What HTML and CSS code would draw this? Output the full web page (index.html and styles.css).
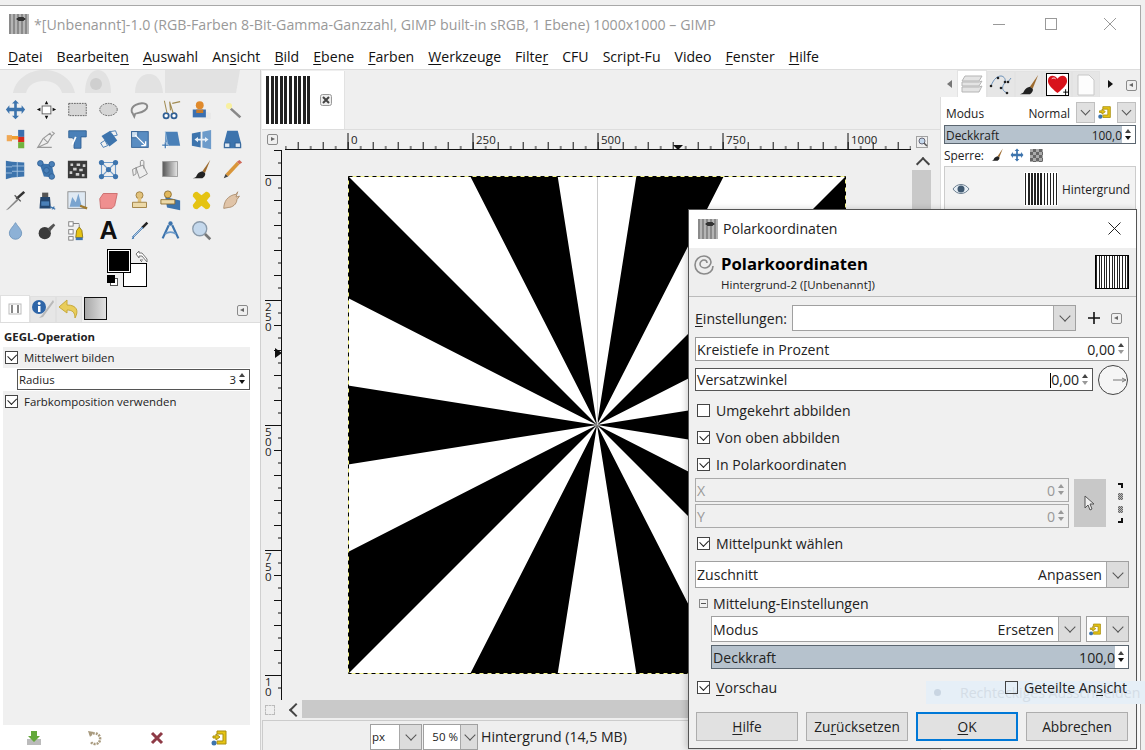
FILE: index.html
```html
<!DOCTYPE html>
<html lang="de">
<head>
    <meta charset="UTF-8">
    <title>GIMP</title>
    <link rel="stylesheet" href="styles.css">
</head>
<body>
<div class="window">
    <div class="titlebar">
        <span class="app-icon"></span>
        <span class="title-text">*[Unbenannt]-1.0 (RGB-Farben 8-Bit-Gamma-Ganzzahl, GIMP built-in sRGB, 1 Ebene) 1000x1000 – GIMP</span>
        <span class="win-btn win-min"></span>
        <span class="win-btn win-max"></span>
        <svg class="win-close" width="14" height="14" viewBox="0 0 14 14"><path d="M1 1l12 12M13 1L1 13" stroke="#999" fill="none"/></svg>
    </div>
    <div class="menubar">
        <span><u>D</u>atei</span><span>Bearbeite<u>n</u></span><span><u>A</u>uswahl</span><span>An<u>s</u>icht</span><span><u>B</u>ild</span><span><u>E</u>bene</span><span><u>F</u>arben</span><span><u>W</u>erkzeuge</span><span>Filte<u>r</u></span><span>CFU</span><span>Script-Fu</span><span>Video</span><span><u>F</u>enster</span><span><u>H</u>ilfe</span>
    </div>
    <div class="workspace">
        <!-- Toolbox -->
        <div class="toolbox">
            <svg class="wilber" width="260" height="23" viewBox="0 0 260 23"><path d="M13 23C16 8 30 0 44 0s28 8 31 23H62C60 15 53 11 44 11s-16 4-18 12z" fill="#e2e2e2"/><path d="M85 23c0-13 5-23 13-23s13 10 13 23z" fill="#e2e2e2"/><circle cx="96" cy="14" r="6" fill="#cfcfcf"/><path d="M135 23c0-12 6-19 14-19s13 7 14 19z" fill="#e2e2e2"/><path d="M165 0h75l-4 23h-71z" fill="#e2e2e2"/></svg>
            <div class="tool-grid">
                <svg viewBox="0 0 24 24"><path d="M12 1l4 4h-2.500v5H19V7l4 5-4 5v-3h-5.500v5H16l-4 4-4-4h2.500v-5H5v3l-4-5 4-5v3h5.500V5H8z" fill="#3d74ad"/></svg>
                <svg viewBox="0 0 24 24"><rect x="7" y="8" width="10" height="9" fill="#fff" stroke="#555"/><path d="M12 2l2 4h-4zM12 23l-2-4h4zM1 12l4-2v4zM23 12l-4 2v-4z" fill="#111"/></svg>
                <svg viewBox="0 0 24 24"><rect x="2" y="5" width="20" height="14" fill="#d6d6d6" stroke="#555" stroke-dasharray="2 1"/></svg>
                <svg viewBox="0 0 24 24"><ellipse cx="12" cy="12" rx="10" ry="7" fill="#d6d6d6" stroke="#555" stroke-dasharray="2 1"/></svg>
                <svg viewBox="0 0 24 24"><path d="M3 13c0-5 8-9 14-8 5 1 5 5 1 8-4 3-9 3-11 4l-1 3-2-4c-1-1-1-2-1-3z" fill="none" stroke="#8a8a8a" stroke-width="2.200"/></svg>
                <svg viewBox="0 0 24 24"><circle cx="7" cy="19" r="3" fill="#fff" stroke="#2f5f94" stroke-width="2"/><circle cx="16" cy="19" r="3" fill="#fff" stroke="#2f5f94" stroke-width="2"/><path d="M8 16L5 2M15 16L11 3l1 10M14 5l9-2" stroke="#a08a50" stroke-width="1.200" fill="none"/></svg>
                <svg viewBox="0 0 24 24"><path d="M12 13l11 3v7H12z" fill="#e9e9e9"/><rect x="2" y="12" width="15" height="9" fill="#3a6fb0"/><circle cx="10" cy="7" r="4.500" fill="#e08a2c"/><path d="M6 12h8v4H6z" fill="#c87a28"/></svg>
                <svg viewBox="0 0 24 24"><path d="M10 11l11 10" stroke="#888" stroke-width="3"/><circle cx="8" cy="8" r="3.500" fill="#f8f0a0"/></svg>

                <svg viewBox="0 0 24 24"><rect x="15" y="1" width="7" height="8" fill="#3a6fb0"/><rect x="15" y="9" width="7" height="6" fill="#d92a1c"/><rect x="15" y="15" width="7" height="7" fill="#72b33e"/><rect x="2" y="7" width="6" height="7" fill="#f0a855"/><path d="M8 8h7v4H8z" fill="#f0a030"/></svg>
                <svg viewBox="0 0 24 24"><path d="M2 21L8 11l8-6 2 3-5 8zM2 21h16M9 11l5 5M18 3l3 2-4 4" fill="none" stroke="#9a9a9a" stroke-width="1.200"/></svg>
                <svg viewBox="0 0 24 24"><path d="M2 2h20v7h-6v13h-8V12l-2-2H2z" fill="#4a80b8" stroke="#2f5f94"/><path d="M10 9l-4 9" stroke="#fff" stroke-width="2"/></svg>
                <svg viewBox="0 0 24 24"><path d="M4 8l10-6 8 11-9 7z" fill="#3d74ad"/><path d="M14 3l6-1 2 5-4 1zM3 16l5-3 3 6-5 2z" fill="#f2f2f2" stroke="#3d74ad"/></svg>

                <svg viewBox="0 0 24 24"><rect x="3" y="3" width="19" height="18" fill="#5a8dc2" stroke="#2f5f94"/><rect x="3" y="3" width="7" height="7" fill="#cfe0f0" stroke="#2f5f94"/><path d="M7 7l12 12M19 19v-5M19 19h-5" stroke="#fff" stroke-width="1.500" fill="none"/></svg>
                <svg viewBox="0 0 24 24"><path d="M6 3h14l3 16H6z" fill="#4a80b8"/><path d="M6 3l3 16" stroke="#9fc0de"/><path d="M6 15v7M2.500 18.500h7" stroke="#fff" stroke-width="3"/><path d="M6 15v7M2.500 18.500h7" stroke="#3d74ad" stroke-width="1.400"/></svg>
                <svg viewBox="0 0 24 24"><path d="M1 5l10-2v18L1 19z" fill="#3d74ad"/><path d="M13 3l10-2v22l-10-2z" fill="#6d9bca"/><path d="M4 12l4-3v2h8V9l4 3-4 3v-2H8v2z" fill="#e8f0f8"/></svg>
                <svg viewBox="0 0 24 24"><path d="M6 2h12l4 15v5H2v-5z" fill="#3d74ad"/><rect x="3" y="16" width="6" height="5" fill="#dfe9f3" stroke="#2f5f94"/><rect x="15" y="16" width="6" height="5" fill="#dfe9f3" stroke="#2f5f94"/></svg>

                <svg viewBox="0 0 24 24"><path d="M1 2l7 1v18l-7 2z" fill="#3d74ad"/><path d="M8 3l14 1v16l-14 1z" fill="#3d74ad"/><path d="M8 8h14M8 14h14M14 3v18M1 9h7M1 16h7" stroke="#a9c6e2"/></svg>
                <svg viewBox="0 0 24 24"><path d="M4 5l14 1 3 15-12-1z" fill="#3d74ad"/><circle cx="5" cy="5" r="3.200" fill="#4a80b8" stroke="#2f5f94"/><circle cx="18" cy="6" r="3.200" fill="#4a80b8" stroke="#2f5f94"/><circle cx="12" cy="13" r="3.200" fill="#4a80b8" stroke="#2f5f94"/><circle cx="18" cy="20" r="3.200" fill="#4a80b8" stroke="#2f5f94"/></svg>
                <svg viewBox="0 0 24 24"><rect x="1" y="2" width="22" height="20" fill="#3a3a3a"/><path d="M4 5h3v3H4zM11 5h4v3h-4zM18 6h3v3h-3zM7 10h4v3H7zM14 11h4v3h-4zM3 14h3v3H3zM10 16h4v3h-4zM17 17h3v3h-3z" fill="#cfcfcf"/></svg>
                <svg viewBox="0 0 24 24"><path d="M4 4h16v16H4zM4 4l8 8 8-8M4 20l8-8 8 8" fill="none" stroke="#6d9bca" stroke-width="1.300"/><g fill="#3d74ad"><circle cx="4" cy="4" r="3"/><circle cx="20" cy="4" r="3"/><circle cx="4" cy="20" r="3"/><circle cx="20" cy="20" r="3"/><circle cx="12" cy="12" r="3"/></g></svg>

                <svg viewBox="0 0 24 24"><path d="M8 10l8-3 5 10-9 5zM4 12l4-2v7l-3 2z" fill="#eee" stroke="#888"/><path d="M13 8V3c0-2 4-2 4 0v8" fill="none" stroke="#888"/></svg>
                <svg viewBox="0 0 24 24"><defs><linearGradient id="grad"><stop offset="0" stop-color="#555"/><stop offset="1" stop-color="#e8e8e8"/></linearGradient></defs><rect x="3" y="3" width="17" height="17" fill="url(#grad)" stroke="#999"/></svg>
                <svg viewBox="0 0 24 24"><path d="M22 1L13 14l3 2z" fill="#9c6a2e"/><path d="M13 14c-5 1-6 4-7 6-1 1-3 2-4 2h11c2-1 4-4 3-6z" fill="#222"/></svg>
                <svg viewBox="0 0 24 24"><path d="M17 3L4 17l3 3L20 6z" fill="#d9963a"/><path d="M17 3l3-2 3 3-3 2z" fill="#d06a5a"/><path d="M4 17l-2 5 5-2z" fill="#444"/></svg>

                <svg viewBox="0 0 24 24"><path d="M21 1l2 2-9 8-2-2z" fill="#333"/><path d="M14 10L3 21l-2 2 3-1 11-10z" fill="#888"/><path d="M11 6l7 7" stroke="#555" stroke-width="1.500"/></svg>
                <svg viewBox="0 0 24 24"><path d="M5 8h11l1 13H4z" fill="#24466e"/><rect x="7" y="3" width="7" height="5" fill="#555"/><rect x="6" y="13" width="9" height="5" fill="#4a80b8"/><path d="M16 19l6 3M18 22l3-3" stroke="#3d74ad" stroke-width="1.500"/></svg>
                <svg viewBox="0 0 24 24"><rect x="1" y="2" width="20" height="19" fill="#dfe9f3" stroke="#888"/><path d="M3 19l3-11 4 6 3-10 4 15z" fill="#7aa4cf"/><path d="M15 18l8 3" stroke="#a07a2e" stroke-width="2.500"/></svg>
                <svg viewBox="0 0 24 24"><path d="M6 4h16l-3 14-3 3H3L2 10z" fill="#ef8f8f" stroke="#c96868"/></svg>

                <svg viewBox="0 0 24 24"><circle cx="12" cy="6" r="4" fill="#e2c27c" stroke="#9a7a3a"/><path d="M10 9h4v5h-4z" fill="#e2c27c"/><path d="M4 14h16v6H4z" fill="#ecd9a8" stroke="#9a7a3a"/></svg>
                <svg viewBox="0 0 24 24"><path d="M6 8l17 4v11L8 20z" fill="#3d74ad"/><circle cx="9" cy="5" r="4" fill="#e2b85c" stroke="#8a6a2a"/><path d="M1 11h16v5H1z" fill="#ecd9a8" stroke="#8a6a2a"/></svg>
                <svg viewBox="0 0 24 24"><path d="M7 2l5 4 5-4c4 0 5 3 5 5l-4 5 4 5c0 3-2 5-5 5l-5-4-5 4c-3 0-5-2-5-5l4-5-4-5c0-3 2-5 5-5z" fill="#e5c313"/></svg>
                <svg viewBox="0 0 24 24"><path d="M5 11c3-4 8-6 11-6l2-3-2 6 4-1-3 4c0 5-5 9-10 9l-5 1c0-3 1-7 3-10z" fill="#e0c4a8" stroke="#a98a6a"/></svg>

                <svg viewBox="0 0 24 24"><path d="M12 3c3 5 7 8 7 12a7 7 0 0 1-14 0c0-4 4-7 7-12z" fill="#8db1d6" stroke="#6d93ba"/></svg>
                <svg viewBox="0 0 24 24"><circle cx="10" cy="15" r="7" fill="#3a3a3a"/><path d="M13 10l7-6 2 2-6 7z" fill="#555"/></svg>
                <svg viewBox="0 0 24 24"><rect x="2" y="2" width="5" height="5" fill="#fff" stroke="#777"/><rect x="2" y="11" width="5" height="5" fill="#fff" stroke="#777"/><rect x="2" y="19" width="5" height="4" fill="#fff" stroke="#777"/><path d="M7 4h7M14 5v3" stroke="#777"/><path d="M10 20l1-8 3-4 3 4 1 8z" fill="#e5c313" stroke="#8a7410"/><rect x="10" y="20" width="8" height="3" fill="#3d74ad"/></svg>
                <span class="tool-a">A</span>
                <svg viewBox="0 0 24 24"><path d="M20 2l2 2-6 6-2-2z" fill="#222"/><path d="M15 8L4 19l1 1L16 9z" fill="#cfe0f0" stroke="#3d74ad"/><path d="M5 18l-2 4 3-1z" fill="#3d74ad"/></svg>
                <svg viewBox="0 0 24 24"><circle cx="12" cy="4" r="2.500" fill="#3d74ad"/><path d="M10 6L3 21M14 6l7 15" stroke="#3d74ad" stroke-width="2.500"/><path d="M6 16c3-3 9-3 12 0" fill="none" stroke="#6d9bca" stroke-width="2"/></svg>
                <svg viewBox="0 0 24 24"><circle cx="10" cy="10" r="8" fill="#c4d8ec" stroke="#8a9aaa" stroke-width="1.500"/><path d="M16 16l6 6" stroke="#777" stroke-width="3"/></svg>
            </div>
            <div class="swatches">
                <span class="swatch swatch-bg"></span>
                <span class="swatch swatch-fg"></span>
                <span class="swatch-reset"></span>
                <svg class="swatch-swap" width="13" height="13" viewBox="0 0 13 13"><path d="M1 4l3-3v2h3l5 6v3L7 6H4v2zM7 12l-2-2h3" fill="#fff" stroke="#777"/></svg>
            </div>
            <div class="tabs tool-tabs">
                <span class="tab tab-active"><svg width="14" height="14" viewBox="0 0 14 14"><rect x="1" y="2" width="12" height="10" fill="none" stroke="#bbb"/><path d="M4 3v8M10 3v8" stroke="#888" stroke-width="2"/></svg></span>
                <span class="tab"><svg width="24" height="22" viewBox="0 0 24 22"><circle cx="8" cy="9" r="7" fill="#2f66a8"/><rect x="7" y="8" width="2.500" height="6" fill="#fff"/><circle cx="8.200" cy="5.500" r="1.400" fill="#fff"/><path d="M22 2L11 17l-3 3 4-1L23 4z" fill="#b9b9b9"/></svg></span>
                <span class="tab"><svg width="22" height="20" viewBox="0 0 22 20"><path d="M9 1L1 8l8 6v-3c5 0 8 2 8 8 4-7 2-13-8-13z" fill="#e9cd5a" stroke="#c7a93a"/></svg></span>
                <span class="tab tab-grad"></span>
                <span class="panel-menu tab-menu"></span>
            </div>
            <div class="tool-options">
                <div class="opt-title">GEGL-Operation</div>
                <label class="check-row opt-row"><span class="check on"></span>Mittelwert bilden</label>
                <div class="field radius"><span>Radius</span><span class="value">3</span><span class="spin"></span></div>
                <div class="opt-rest">
                    <label class="check-row"><span class="check on"></span>Farbkomposition verwenden</label>
                </div>
                <div class="opt-icons">
                    <svg width="16" height="16" viewBox="0 0 16 16"><rect x="1" y="9" width="14" height="6" fill="#bbb"/><path d="M5 1h6v5h3l-6 6-6-6h3z" fill="#63a83a"/></svg>
                    <svg width="16" height="16" viewBox="0 0 16 16"><path d="M3 5c6-4 11 0 10 5s-7 5-9 2" fill="none" stroke="#a89a7e" stroke-width="2.500" stroke-dasharray="2 1"/><path d="M1 1l6 1-4 5z" fill="#a89a7e"/></svg>
                    <svg width="16" height="16" viewBox="0 0 16 16"><path d="M3 3l10 10M13 3L3 13" stroke="#8e3a46" stroke-width="3"/></svg>
                    <svg width="18" height="18" viewBox="0 0 18 18"><path d="M7 2h9v13H7v-3h6V5H7z" fill="#e5c313" stroke="#a98f10"/><path d="M10 8L6 5v2H3v2h3v2z" fill="#e5c313" stroke="#a98f10"/><circle cx="4" cy="14" r="2.500" fill="#3d74ad"/></svg>
                </div>
            </div>
        </div>

        <!-- Image window -->
        <div class="center">
            <div class="image-tabs">
                <div class="image-tab">
                    <span class="stripes tab-thumb"></span>
                    <svg width="12" height="12" viewBox="0 0 12 12"><rect x=".5" y=".5" width="11" height="11" rx="2" fill="#eee" stroke="#999"/><path d="M3 3l6 6M9 3L3 9" stroke="#444" stroke-width="2"/></svg>
                </div>
            </div>
            <div class="canvas-grid">
                <div class="ruler-corner"><span class="panel-menu play"></span></div>
                <svg class="ruler-h" width="626" height="20">
                    <defs><pattern id="ticksH" x="62.700" y="0" width="25" height="20" patternUnits="userSpaceOnUse"><path d="M.5 12v8M13 16v4" stroke="#111"/></pattern></defs>
                    <rect width="626" height="20" fill="url(#ticksH)"/>
                    <path d="M0 19.500h626M63 3v17M188 3v17M313 3v17M438 3v17M563 3v17" stroke="#111"/>
                    <g class="ruler-num"><text x="66" y="14">0</text><text x="191" y="14">250</text><text x="316" y="14">500</text><text x="441" y="14">750</text><text x="566" y="14">1000</text></g>
                    <path d="M388 15h10l-5 5z" fill="#111"/>
                </svg>
                <div class="zoom-btn">
                    <svg width="12" height="12" viewBox="0 0 12 12"><rect x=".5" y=".5" width="11" height="11" fill="none" stroke="#555" stroke-dasharray="1 1"/><circle cx="6" cy="5" r="3" fill="#c4d8ec" stroke="#667"/><path d="M8 7l3 3" stroke="#555" stroke-width="1.500"/></svg>
                </div>
                <svg class="ruler-v" width="23" height="550">
                    <defs><pattern id="ticksV" x="0" y="25" width="23" height="25" patternUnits="userSpaceOnUse"><path d="M12 .5h8M16 13h4" stroke="#111"/></pattern></defs>
                    <rect width="23" height="550" fill="url(#ticksV)"/>
                    <path d="M19.500 0v550M3 25.500h17M3 150.500h17M3 275.500h17M3 400.500h17M3 525.500h17" stroke="#111"/>
                    <g class="ruler-num">
                        <text x="3" y="36">0</text>
                        <text x="3" y="161">2</text><text x="3" y="171">5</text><text x="3" y="181">0</text>
                        <text x="3" y="286">5</text><text x="3" y="296">0</text><text x="3" y="306">0</text>
                        <text x="3" y="411">7</text><text x="3" y="421">5</text><text x="3" y="431">0</text>
                        <text x="3" y="536">1</text><text x="3" y="546">0</text>
                    </g>
                    <path d="M13 198l7 5-7 5z" fill="#111"/>
                </svg>
                <div class="canvas">
                    <svg class="image" width="500" height="500" viewBox="-1 -1 500 500">
                        <rect width="498" height="498" fill="#fff"/>
                        <path d="M122.100 0h87.500L249 249zM288.400 0h87.500L249 249zM498 0v122.100L249 249zM498 209.600v78.800L249 249zM498 375.900V498L249 249zM375.900 498h-87.500L249 249zM209.600 498h-87.500L249 249zM0 498V375.900L249 249zM0 288.400v-78.800L249 249zM0 122.100V0l249 249z" fill="#000"/>
                        <path d="M249.500 0v249" stroke="#ccc"/>
                        <rect x=".5" y=".5" width="497" height="497" fill="none" stroke="#f4f48a"/>
                        <rect x=".5" y=".5" width="497" height="497" fill="none" stroke="#000" stroke-dasharray="4 4"/>
                    </svg>
                </div>
                <div class="vscroll"><span class="scroll-up"></span><span class="trough"></span></div>
                <div class="nav-corner"><span class="dotted-box"></span></div>
                <div class="hscroll"><span class="scroll-left"></span><span class="trough"></span></div>
            </div>
            <div class="statusbar">
                <div class="combo unit"><span class="combo-text">px</span><span class="chev"></span></div>
                <div class="combo zoom"><span class="combo-text">50 %</span><span class="chev"></span></div>
                <span class="status-text">Hintergrund (14,5 MB)</span>
            </div>
        </div>

        <!-- Docks -->
        <div class="docks">
            <div class="tabs dock-tabs">
                <span class="arr arr-left"></span>
                <span class="tab tab-active"><svg width="24" height="22" viewBox="0 0 24 22"><path d="M5 3h17l-3 5H2zM2 9h17l3-1-3 5H2zM2 14h17l3-1-3 6H2z" fill="#e4e4e4" stroke="#b5b5b5"/></svg></span>
                <span class="tab"><svg width="24" height="24" viewBox="0 0 24 24"><path d="M2 13C5 5 9 3 12 3s6 4 3 8-1 8 4 9M19 9l3-4" fill="none" stroke="#6d93ba"/><g fill="#222"><circle cx="2" cy="13" r="1.300"/><circle cx="9" cy="5" r="1.300"/><circle cx="16" cy="9" r="1.300"/><circle cx="19" cy="9" r="1.300"/><circle cx="12" cy="15" r="1.300"/><circle cx="18" cy="20" r="1.300"/></g></svg></span>
                <span class="tab tab-paint"><svg width="22" height="24" viewBox="0 0 24 24"><path d="M22 1L13 14l3 2z" fill="#9c6a2e"/><path d="M13 14c-5 1-6 4-7 6-1 1-3 2-4 2h11c2-1 4-4 3-6z" fill="#222"/></svg></span>
                <span class="tab tab-brush"><svg width="23" height="23" viewBox="0 0 22 22"><path d="M11 20C4 14 1 11 1 7c0-6 7-7 10-2 3-5 10-4 10 2 0 4-3 7-10 13z" fill="#d8131c"/><path d="M5 5c1-1 3-1 4 0" stroke="#fff" fill="none"/><path d="M17 19h5M19.500 16v6" stroke="#000"/></svg></span>
                <span class="tab"><svg width="20" height="24" viewBox="0 0 20 24"><path d="M2 2h11l5 5v15H2z" fill="#fdfdfd" stroke="#c8c8c8"/></svg></span>
                <span class="arr arr-right"></span>
                <span class="panel-menu tab-menu"></span>
            </div>
            <div class="layers">
                <div class="mode-row">
                    <span>Modus</span>
                    <span class="mode-value">Normal</span>
                    <span class="chev-btn"><span class="chev-mark"></span></span>
                    <svg width="15" height="17" viewBox="0 0 18 18"><path d="M7 2h9v13H7v-3h6V5H7z" fill="#e5c313" stroke="#a98f10"/><path d="M10 8L6 5v2H3v2h3v2z" fill="#e5c313" stroke="#a98f10"/><circle cx="4" cy="14" r="2.500" fill="#3d74ad"/></svg>
                    <span class="chev-btn"><span class="chev-mark"></span></span>
                </div>
                <div class="field bar dock-bar"><span>Deckkraft</span><span class="value">100,0</span><span class="spin"></span></div>
                <div class="lock-row">
                    <span>Sperre:</span>
                    <svg width="14" height="14" viewBox="0 0 24 24"><path d="M22 1L13 14l3 2z" fill="#9c6a2e"/><path d="M13 14c-5 1-6 4-7 6-1 1-3 2-4 2h11c2-1 4-4 3-6z" fill="#222"/></svg>
                    <svg width="14" height="14" viewBox="0 0 24 24"><path d="M12 1l4 4h-2.500v5H19V7l4 5-4 5v-3h-5.500v5H16l-4 4-4-4h2.500v-5H5v3l-4-5 4-5v3h5.500V5H8z" fill="#3d74ad"/></svg>
                    <span class="checker"></span>
                </div>
                <div class="layer-list">
                    <div class="layer-row">
                        <svg class="eye" width="18" height="12" viewBox="0 0 18 12"><path d="M1 6c4-6 12-6 16 0-4 6-12 6-16 0z" fill="#e6eef5" stroke="#6d7f90"/><circle cx="9" cy="6" r="3.500" fill="#3f5870"/></svg>
                        <span class="layer-thumb"><span class="stripes"></span></span>
                        <span>Hintergrund</span>
                    </div>
                </div>
            </div>
        </div>
    </div>
</div>

<!-- Filter dialog -->
<div class="dialog">
    <div class="dlg-title">
        <span class="app-icon"></span>
        <span class="dlg-title-text">Polarkoordinaten</span>
        <svg width="13" height="13" viewBox="0 0 13 13"><path d="M.5.5l12 12M12.500.5l-12 12" stroke="#222" fill="none"/></svg>
    </div>
    <div class="dlg-head">
        <svg class="spiral" width="22" height="22" viewBox="0 0 22 22"><path d="M20 12c0 5-4 8-9 8S2 16 2 11s4-9 9-9c4 0 7 3 7 6s-3 6-6 6-5-2-5-4 2-4 4-4 3 1 3 3" fill="none" stroke="#8a8a8a" stroke-width="1.600"/></svg>
        <div class="dlg-head-text">
            <div class="dlg-heading">Polarkoordinaten</div>
            <div class="dlg-sub">Hintergrund-2 ([Unbenannt])</div>
        </div>
        <span class="stripes dlg-thumb"></span>
    </div>
    <div class="dlg-body">
        <div class="settings-row">
            <span><u>E</u>instellungen:</span>
            <div class="combo settings-combo"><span class="combo-text"></span><span class="chev"></span></div>
            <svg class="plus" width="12" height="12" viewBox="0 0 12 12"><path d="M6 0v12M0 6h12" stroke="#111" stroke-width="1.600"/></svg>
            <span class="panel-menu"></span>
        </div>
        <div class="field depth"><span>Kreistiefe in Prozent</span><span class="value">0,00</span><span class="spin"></span></div>
        <div class="angle-row">
            <div class="field angle"><span>Versatzwinkel</span><span class="value"><span class="caret"></span>0,00</span><span class="spin"></span></div>
            <svg class="dial" width="30" height="30" viewBox="0 0 30 30"><circle cx="15" cy="15" r="14.500" fill="#f5f5f5" stroke="#444"/><path d="M15 15h13M24 13l4 2-4 2" stroke="#777" fill="none"/></svg>
        </div>
        <label class="check-row r1"><span class="check"></span>Umgekehrt abbilden</label>
        <label class="check-row r2"><span class="check on"></span>Von oben abbilden</label>
        <label class="check-row r2"><span class="check on"></span>In Polarkoordinaten</label>
        <div class="xy-row">
            <div class="xy-fields">
                <div class="field off"><span>X</span><span class="value">0</span><span class="spin"></span></div>
                <div class="field off"><span>Y</span><span class="value">0</span><span class="spin"></span></div>
            </div>
            <span class="pick-btn"><svg width="12" height="17" viewBox="0 0 12 17"><path d="M1 1v12l3-3 2 5 2-1-2-5h4z" fill="#eee" stroke="#555"/></svg></span>
            <span class="chain"><i class="chain-top"></i><i class="chain-dots"></i><i class="chain-dots"></i><i class="chain-bottom"></i></span>
        </div>
        <label class="check-row r3"><span class="check on"></span>Mittelpunkt wählen</label>
        <div class="combo crop"><span class="combo-text"><span>Zuschnitt</span><span>Anpassen</span></span><span class="chev"></span></div>
        <div class="expander"><span class="exp-box"></span>Mittelung-Einstellungen</div>
        <div class="blend">
            <div class="blend-mode">
                <div class="combo"><span class="combo-text"><span>Modus</span><span>Ersetzen</span></span><span class="chev"></span></div>
                <div class="combo space-combo"><span class="combo-text"><svg width="17" height="19" viewBox="0 0 18 18"><path d="M7 2h9v13H7v-3h6V5H7z" fill="#e5c313" stroke="#a98f10"/><path d="M10 8L6 5v2H3v2h3v2z" fill="#e5c313" stroke="#a98f10"/><circle cx="4" cy="14" r="2.500" fill="#3d74ad"/></svg></span><span class="chev"></span></div>
            </div>
            <div class="field bar blend-bar"><span>Deckkraft</span><span class="value">100,0</span><span class="spin"></span></div>
        </div>
        <div class="preview-row">
            <label class="check-row"><span class="check on"></span><span><u>V</u>orschau</span></label>
            <label class="check-row"><span class="check split"></span><span>Geteilte An<u>s</u>icht</span></label>
        </div>
        <div class="dlg-buttons">
            <button><u>H</u>ilfe</button>
            <button>Zu<u>r</u>ücksetzen</button>
            <button class="default"><u>O</u>K</button>
            <button>Abbre<u>c</u>hen</button>
        </div>
    </div>
    <div class="ghost-tip"><i></i>Rechteckiges Ausschneiden</div>
</div>
</body>
</html>
```

FILE: styles.css
```css
* {
    box-sizing: border-box;
}
html, body {
    margin: 0;
    height: 750px;
    overflow: hidden;
}
body {
    position: relative;
    width: 1145px;
    background-color: #f0f0f0;
    font-family: "Open Sans", "Noto Sans", sans-serif;
    font-size: 14.1px;
    color: #222;
}
.window {
    width: 1141px;
    height: 745px;
    margin-top: 5px;
    border-top: 1px solid #a8a8a8;
    border-right: 1px solid #a8a8a8;
    background-color: #fff;
    display: flex;
    flex-direction: column;
}
.titlebar {
    height: 35px;
    flex: none;
    display: flex;
    align-items: center;
    padding: 1px 0 0 9px;
    color: #999;
}
.app-icon {
    width: 20px;
    height: 20px;
    flex: none;
    background:
        radial-gradient(ellipse 7px 3px at 12px 5px, #333 60%, transparent 70%),
        repeating-linear-gradient(90deg, #8a8a8a 0, #8a8a8a 2px, #b5b5b5 2px, #b5b5b5 4px);
}
.title-text {
    margin-left: 5px;
    padding-top: 1px;
    flex: 1;
    font-size: 14.2px;
}
.win-btn {
    display: block;
}
.win-min {
    width: 12px;
    height: 1px;
    background-color: #999;
}
.win-max {
    width: 12px;
    height: 12px;
    margin-left: 40px;
    border: 1px solid #999;
}
.win-close {
    margin: 0 23px 0 46px;
}
.menubar {
    height: 29px;
    flex: none;
    display: flex;
    align-items: center;
    gap: 14px;
    padding: 3px 0 0 8px;
    border-bottom: 1px solid #ddd;
    color: #111;
}
u {
    text-underline-offset: 2px;
}
.workspace {
    flex: 1;
    display: flex;
    min-height: 0;
    background-color: #efefef;
}

/* toolbox */
.toolbox {
    width: 261px;
    flex: none;
    display: flex;
    flex-direction: column;
    border-right: 1px solid #d0d0d0;
    font-size: 11.4px;
}
.wilber {
    display: block;
    flex: none;
}
.tool-grid {
    margin-top: 1px;
    display: grid;
    grid-template-columns: repeat(8, 31px);
    grid-auto-rows: 30.4px;
    justify-items: center;
    align-items: center;
}
.tool-grid svg {
    width: 21px;
    height: 21px;
    filter: blur(0.3px);
}
.tool-a {
    font-family: "Liberation Sans", sans-serif;
    font-size: 25px;
    font-weight: 700;
    line-height: 1;
    color: #111;
    display: block;
}
.swatches {
    position: relative;
    height: 38px;
    margin-top: 3px;
    flex: none;
}
.swatch {
    position: absolute;
    display: block;
    width: 24px;
    height: 24px;
    border: 1px solid #000;
}
.swatch-fg {
    left: 107px;
    top: 0;
    background-color: #000;
    outline: 1px solid #fff;
    outline-offset: -2px;
}
.swatch-bg {
    left: 123px;
    top: 14px;
    background-color: #fff;
}
.swatch-reset {
    position: absolute;
    left: 107px;
    top: 26px;
    width: 8px;
    height: 8px;
    background-color: #000;
    box-shadow: 3px 3px 0 -1px #fff, 3px 3px 0 0 #555;
}
.swatch-swap {
    position: absolute;
    left: 135px;
    top: 1px;
}
.tabs {
    display: flex;
    flex: none;
}
.tool-tabs {
    height: 27px;
    margin-top: 8px;
    align-items: flex-end;
}
.tab {
    display: flex;
    align-items: center;
    justify-content: center;
    height: 26px;
    width: 26px;
    background-color: #e6e6e6;
    border: 1px solid #e0e0e0;
    border-bottom: none;
}
.tool-tabs .tab-active {
    width: 30px;
}
.tab-active {
    height: 27px;
    background-color: #fff;
}
.tab-grad {
    width: 23px;
    height: 23px;
    margin: 0 0 2px 2px;
    border: 1px solid #111;
    background: linear-gradient(90deg, #a8a8a8, #e2e2e2);
}
.tab-menu {
    margin: 0 0 6px auto;
}
.tool-tabs .tab-menu {
    margin-right: 12px;
}
.panel-menu {
    position: relative;
    display: block;
    flex: none;
    width: 11px;
    height: 11px;
    border: 1px solid #8a8a8a;
    border-radius: 2px;
}
.panel-menu::after {
    content: "";
    position: absolute;
    left: 2px;
    top: 2px;
    border: 2.500px solid transparent;
    border-left: none;
    border-right: 4px solid #666;
}
.tool-options {
    flex: 1;
    min-height: 0;
    display: flex;
    flex-direction: column;
    padding: 0 10px 0 3px;
    background-color: #fff;
    border-top: 1px solid #ddd;
}
.opt-title {
    height: 24px;
    padding: 5px 0 0 1px;
    font-weight: 700;
    line-height: 18px;
}
.check-row {
    display: flex;
    align-items: center;
    height: 20px;
    color: #222;
}
.check {
    position: relative;
    display: block;
    flex: none;
    width: 13px;
    height: 13px;
    margin: 0 6px 0 2px;
    border: 1px solid #444;
    background-color: #fff;
}
.check.on::after {
    content: "";
    position: absolute;
    left: 2px;
    top: 1.500px;
    width: 7px;
    height: 4.500px;
    border-left: 1px solid #222;
    border-bottom: 1px solid #222;
    transform: rotate(-45deg);
}
.opt-row {
    height: 21px;
    background-color: #f0f0f0;
}
.field {
    display: flex;
    align-items: center;
    padding-left: 1px;
    background-color: #fff;
    border: 1px solid #9a9a9a;
    color: #222;
}
.field .value {
    margin-left: auto;
}
.spin {
    position: relative;
    display: block;
    flex: none;
    width: 13px;
    height: 100%;
    background-color: #fff;
}
.spin::before, .spin::after {
    content: "";
    position: absolute;
    left: 3px;
    border: 3.500px solid transparent;
    border-top: none;
    border-bottom: 4px solid #444;
}
.spin::before {
    top: 50%;
    margin-top: -6px;
}
.spin::after {
    top: 50%;
    margin-top: 1px;
    transform: rotate(180deg);
    border-bottom-color: #999;
}
.radius {
    height: 21px;
    margin: 1px 0 1px 14px;
    border-color: #555;
}
.radius .spin::after, .bar .spin::after {
    border-bottom-color: #111;
}
.opt-rest {
    flex: 1;
    background-color: #f0f0f0;
}
.opt-rest .check-row {
    height: 21px;
}
.opt-icons {
    height: 25px;
    flex: none;
    display: flex;
    align-items: center;
    padding: 0 22px 0 23px;
    justify-content: space-between;
}

/* centre */
.center {
    flex: 1;
    min-width: 0;
    display: flex;
    flex-direction: column;
    padding-left: 1px;
}
.image-tabs {
    height: 60px;
    flex: none;
    border-bottom: 1px solid #ddd;
    padding-top: 1px;
}
.image-tab {
    width: 83px;
    height: 58px;
    display: flex;
    align-items: center;
    gap: 8px;
    padding-left: 4px;
    background-color: #fff;
    border-right: 1px solid #e2e2e2;
}
.stripes {
    display: block;
    background: repeating-linear-gradient(90deg, #222 0, #222 3px, #fff 3px, #fff 4.600px);
}
.tab-thumb {
    width: 46px;
    height: 48px;
}
.canvas-grid {
    flex: 1;
    min-height: 0;
    display: grid;
    grid-template-columns: 23px 626px 1fr;
    grid-template-rows: 20px 1fr 18px;
}
.ruler-corner {
    padding: 4px 0 0 5px;
}
.play::after {
    left: 3px;
    border-left: 4px solid #666;
    border-right: none;
}
.ruler-h, .ruler-v {
    display: block;
}
.ruler-num {
    font-family: "Open Sans", sans-serif;
    font-size: 11.500px;
    fill: #222;
}
.zoom-btn {
    padding: 3px 0 0 5px;
}
.canvas {
    overflow: hidden;
    min-height: 0;
    padding: 25px 0 0 62px;
}
.image {
    display: block;
}
.vscroll {
    width: 19px;
    display: flex;
    flex-direction: column;
    margin-left: 1px;
}
.trough {
    display: block;
    flex: 1;
    background-color: #c9c9c9;
}
.scroll-up {
    display: block;
    position: relative;
    height: 20px;
    flex: none;
}
.scroll-up::after {
    content: "";
    position: absolute;
    left: 6px;
    top: 9px;
    width: 8px;
    height: 8px;
    border-left: 2px solid #444;
    border-top: 2px solid #444;
    transform: rotate(45deg);
}
.nav-corner {
    padding: 5px 0 0 3px;
}
.dotted-box {
    display: block;
    width: 10px;
    height: 10px;
    border: 1px dashed #bbb;
}
.hscroll {
    grid-column: 2 / 4;
    display: flex;
}
.scroll-left {
    display: block;
    position: relative;
    width: 17px;
    flex: none;
}
.scroll-left::after {
    content: "";
    position: absolute;
    left: 6px;
    top: 5px;
    width: 8px;
    height: 8px;
    border-left: 2px solid #444;
    border-bottom: 2px solid #444;
    transform: rotate(45deg);
}
.statusbar {
    height: 30px;
    flex: none;
    margin-top: 2px;
    display: flex;
    align-items: center;
    padding: 2px 0 0 107px;
    border-top: 1px solid #ccc;
    border-left: 1px solid #ccc;
}
.combo {
    display: flex;
    align-items: stretch;
    background-color: #fff;
    border: 1px solid #a0a0a0;
}
.combo-text {
    flex: 1;
    display: flex;
    align-items: center;
    justify-content: space-between;
    padding: 0 4px 0 1px;
    min-width: 0;
}
.chev {
    position: relative;
    display: block;
    flex: none;
    width: 22px;
    background-color: #dcdcdc;
    border-left: 1px solid #a8a8a8;
}
.chev::after, .chev-mark {
    content: "";
    position: absolute;
    left: 50%;
    top: 50%;
    width: 7px;
    height: 7px;
    margin: -6px 0 0 -3.500px;
    border-right: 1px solid #555;
    border-bottom: 1px solid #555;
    transform: rotate(45deg);
}
.unit {
    width: 52px;
    height: 26px;
    font-size: 11.5px;
}
.zoom {
    width: 55px;
    height: 26px;
    margin-left: 1px;
    font-size: 11.5px;
}
.zoom .combo-text {
    justify-content: flex-end;
    padding-right: 2px;
}
.zoom .chev {
    width: 17px;
}
.status-text {
    margin-left: 3px;
}

/* docks */
.docks {
    width: 200px;
    flex: none;
    display: flex;
    flex-direction: column;
    font-size: 11.9px;
}
.dock-tabs {
    height: 27px;
    align-items: flex-end;
    margin-left: 1px;
}
.dock-tabs .tab {
    width: 28px;
    border-color: #e3e3e3;
}
.dock-tabs .tab-active {
    width: 30px;
}
.dock-tabs .tab-paint {
    width: 27px;
}
.dock-tabs .tab-brush {
    width: 30px;
    padding: 0;
}
.tab-brush svg {
    border: 1px solid #000;
    background-color: #fff;
}
.arr {
    display: block;
    flex: none;
    width: 5px;
    height: 8px;
    align-self: center;
    border: 4px solid transparent;
}
.arr-left {
    margin: 0 5px 0 6px;
    border-left: none;
    border-right: 5px solid #777;
}
.arr-right {
    margin: 0 0 0 8px;
    border-right: none;
    border-left: 5px solid #111;
}
.dock-tabs .tab-menu {
    margin-right: 3px;
}
.layers {
    flex: 1;
    background-color: #fff;
    border-left: 1px solid #ddd;
    padding: 5px 4px 0 3px;
}
.mode-row {
    height: 21px;
    display: flex;
    align-items: center;
    gap: 2px;
    padding-left: 2px;
}
.mode-value {
    margin: 0 4px 0 auto;
}
.chev-btn {
    position: relative;
    display: block;
    width: 19px;
    height: 21px;
    background-color: #e0e0e0;
    border: 1px solid #c0c0c0;
}
.chev-btn:last-child {
    margin-left: 3px;
}
.chev-mark {
    display: block;
}
.bar {
    background-color: #b6c2cd;
    border: 1px solid #5b6670;
}
.dock-bar {
    height: 19px;
    margin-top: 2px;
}
.lock-row {
    height: 22px;
    display: flex;
    align-items: center;
    gap: 6px;
}
.checker {
    display: block;
    width: 13px;
    height: 13px;
    background: repeating-conic-gradient(#666 0 25%, #aaa 0 50%) 0 0 / 6px 6px;
}
.layer-list {
    height: 60px;
    background-color: #f3f3f3;
    border: 1px solid #ccc;
}
.layer-row {
    height: 44px;
    display: flex;
    align-items: center;
    padding-left: 6px;
}
.eye {
    margin-left: 1px;
}
.layer-thumb {
    display: block;
    width: 34px;
    height: 34px;
    padding: 1px;
    margin: 0 4px 0 54px;
    background-color: #fff;
}
.layer-thumb .stripes {
    height: 100%;
    background: repeating-linear-gradient(90deg, #222 0, #222 1.500px, #fff 1.500px, #fff 3.100px);
}

/* dialog */
.dialog {
    position: absolute;
    left: 688px;
    top: 209px;
    width: 449px;
    height: 540px;
    display: flex;
    flex-direction: column;
    background-color: #f0f0f0;
    border: 1px solid #555;
    box-shadow: -2px 0 6px rgba(0,0,0,0.18);
}
.dlg-title {
    height: 38px;
    flex: none;
    display: flex;
    align-items: center;
    padding: 0 15px 1px 9px;
    background-color: #fff;
    color: #222;
}
.dlg-title-text {
    margin-left: 5px;
    flex: 1;
}
.dlg-head {
    height: 49px;
    flex: none;
    display: flex;
    padding: 4px 7px 0 4px;
    background-color: #eeeeee;
    border-bottom: 1px solid #bbb;
}
.dlg-head-text {
    flex: 1;
    margin-left: 6px;
}
.spiral {
    margin-top: 2px;
}
.dlg-heading {
    font-size: 16.700px;
    font-weight: 700;
    line-height: 24px;
    color: #000;
}
.dlg-sub {
    font-size: 11.500px;
    line-height: 18px;
}
.dlg-thumb {
    width: 34px;
    height: 34px;
    margin-top: 3px;
    border: 1px solid #000;
    background: repeating-linear-gradient(90deg, #222 0, #222 1px, #fff 1px, #fff 2.600px);
}
.dlg-body {
    flex: 1;
    padding: 0 7px 0 6px;
}
.settings-row {
    height: 26px;
    margin-top: 8px;
    display: flex;
    align-items: center;
}
.settings-combo {
    width: 284px;
    height: 26px;
    margin-left: 5px;
}
.plus {
    margin: 0 11px 0 12px;
}
.depth {
    height: 24px;
    margin-top: 6px;
}
.angle-row {
    height: 23px;
    margin-top: 7px;
    display: flex;
    align-items: center;
    gap: 5px;
}
.angle {
    flex: none;
    width: 398px;
    height: 23px;
    border-color: #555;
}
.dial {
    flex: none;
}
.caret {
    display: inline-block;
    width: 1px;
    height: 15px;
    background-color: #000;
    vertical-align: -3px;
}
.r1 {
    margin-top: 9px;
}
.r2 {
    margin-top: 7px;
}
.r3 {
    margin-top: 5px;
}
.xy-row {
    display: flex;
    align-items: center;
    margin-top: 4px;
}
.xy-fields {
    width: 374px;
    display: flex;
    flex-direction: column;
    gap: 2px;
}
.off {
    height: 24px;
    background-color: #f0f0f0;
    border-color: #aaa;
    color: #999;
}
.off .spin {
    background-color: transparent;
}
.off .spin::before, .off .spin::after {
    border-bottom-color: #999;
}
.pick-btn {
    width: 32px;
    height: 48px;
    margin-left: 5px;
    display: flex;
    align-items: center;
    justify-content: center;
    background-color: #c8c8c8;
}
.chain {
    width: 8px;
    height: 40px;
    margin-left: 9px;
    display: flex;
    flex-direction: column;
    justify-content: space-between;
    align-items: flex-end;
}
.chain i {
    display: block;
}
.chain-top, .chain-bottom {
    width: 5px;
    height: 5px;
    border-right: 2px solid #111;
}
.chain-top {
    border-top: 2px solid #111;
}
.chain-bottom {
    border-bottom: 2px solid #111;
}
.chain-dots {
    width: 5px;
    height: 7px;
    background: repeating-conic-gradient(#666 0 25%, #bbb 0 50%) 0 0 / 2px 2px;
}
.crop {
    height: 27px;
    margin-top: 8px;
}
.expander {
    height: 20px;
    margin-top: 5px;
    display: flex;
    align-items: center;
}
.exp-box {
    position: relative;
    display: block;
    width: 9px;
    height: 9px;
    margin: 0 5px 0 4px;
    border: 1px solid #888;
}
.exp-box::after {
    content: "";
    position: absolute;
    left: 1px;
    top: 3px;
    width: 5px;
    height: 1px;
    background-color: #555;
}
.blend {
    margin: 3px 0 0 16px;
}
.blend-mode {
    height: 26px;
    display: flex;
    gap: 5px;
}
.blend-mode .combo {
    flex: 1;
}
.blend-mode .space-combo {
    flex: none;
    width: 43px;
}
.blend-bar {
    height: 24px;
    margin-top: 3px;
}
.preview-row {
    position: relative;
    z-index: 1;
    height: 20px;
    margin-top: 8px;
    padding-right: 2px;
    display: flex;
    justify-content: space-between;
}
.split {
    margin-right: 6px;
    background-color: transparent;
}
.dlg-buttons {
    display: flex;
    gap: 8px;
    margin: 15px 0 0 1px;
}
button {
    width: 102px;
    height: 29px;
    padding: 0;
    font: inherit;
    font-size: 13.7px;
    color: #222;
    background-color: #e1e1e1;
    border: 1px solid #adadad;
}
button.default {
    border: 2px solid #0078d7;
}
.ghost-tip {
    position: absolute;
    left: 237px;
    top: 471px;
    width: 219px;
    height: 23px;
    display: flex;
    align-items: center;
    white-space: nowrap;
    overflow: hidden;
    background-color: #e6eff7;
    color: #d4dde6;
}
.ghost-tip i {
    display: block;
    flex: none;
    width: 7px;
    height: 7px;
    margin: 0 19px 0 8px;
    border-radius: 50%;
    background-color: #c9d5e2;
}
```
